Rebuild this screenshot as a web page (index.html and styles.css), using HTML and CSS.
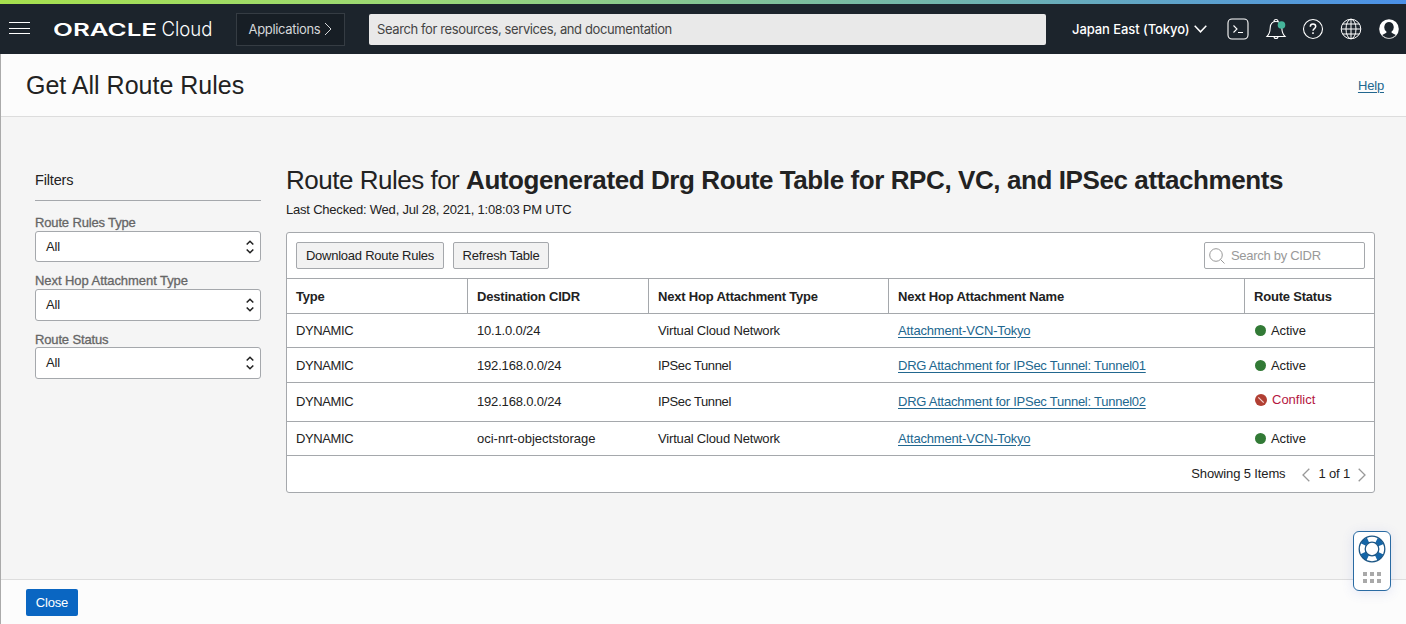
FILE: index.html
```html
<!DOCTYPE html>
<html lang="en">
<head>
    <meta charset="UTF-8">
    <meta name="viewport" content="width=device-width, initial-scale=1.0">
    <title>Get All Route Rules</title>
    <link rel="stylesheet" href="styles.css">
</head>
<body>
    <div class="stripe"></div>
    <header class="topbar">
        <svg class="menu" width="22" height="14" viewBox="0 0 22 14" stroke="#fff" stroke-width="1">
            <path d="M0 1.500h21M0 7.500h21M0 12.500h21"/>
        </svg>
        <svg class="logo" width="162" height="28" viewBox="0 0 162 28" fill="#fff">
            <text class="logo-oracle" x="-1" y="21" textLength="104" lengthAdjust="spacingAndGlyphs">ORACLE</text>
            <text class="logo-cloud" x="107.500" y="21" textLength="51" lengthAdjust="spacingAndGlyphs">Cloud</text>
        </svg>
        <button class="apps">
            <span>Applications</span>
            <svg width="8" height="14" viewBox="0 0 8 14" fill="none" stroke="#d5d7d9"><path d="M1 1l6 6-6 6"/></svg>
        </button>
        <div class="search">Search for resources, services, and documentation</div>
        <div class="region">
            <span>Japan East (Tokyo)</span>
            <svg width="13" height="8" viewBox="0 0 13 8" fill="none" stroke="#fff" stroke-width="1.500"><path d="M.7.8l5.800 6 5.800-6"/></svg>
        </div>
        <div class="icons">
            <svg width="22" height="22" viewBox="0 0 22 22" fill="none" stroke="#fff" stroke-width="1.100">
                <rect x="1" y="1" width="20" height="20" rx="4"/>
                <path d="M6.500 7.500l3.500 3.500-3.500 3.500M11 14.500h5"/>
            </svg>
            <svg width="22" height="22" viewBox="0 0 22 22" fill="none" stroke="#fff" stroke-width="1.100">
                <path d="M9 3.500a2 2 0 0 1 4 0M2 18.500c2.200-2.200 3-4.500 3.200-8.500.2-4 2.400-6.500 5.800-6.500s5.600 2.500 5.800 6.500c.2 4 1 6.300 3.200 8.500zM9 18.500a2 2 0 0 0 4 0"/>
                <circle cx="16.500" cy="7" r="3.800" fill="#45b59b" stroke="none"/>
            </svg>
            <svg width="22" height="22" viewBox="0 0 22 22" fill="none" stroke="#fff" stroke-width="1.100">
                <circle cx="11" cy="11" r="9.500"/>
                <path d="M8.300 8.700c0-1.700 1.100-2.700 2.700-2.700s2.700 1 2.700 2.500c0 2-2.700 2.200-2.700 4.300M11 14.300v1.700" stroke-width="1.500"/>
            </svg>
            <svg width="22" height="22" viewBox="0 0 22 22" fill="none" stroke="#fff" stroke-width="1">
                <circle cx="11" cy="11" r="9.800"/>
                <ellipse cx="11" cy="11" rx="5" ry="9.800"/>
                <path d="M11 1.200v19.600M1.200 11h19.600M2.500 6h17M2.500 16h17"/>
            </svg>
            <svg width="22" height="22" viewBox="0 0 22 22">
                <circle cx="11" cy="11" r="9.800" fill="#fff"/>
                <path d="M11 4a4.800 5.200 0 0 1 2.600 9.500v1.300l4.200 2.200a9 9 0 0 1-13.600 0l4.200-2.200v-1.300A4.800 5.200 0 0 1 11 4z" fill="#1c242c"/>
                <path d="M4.500 17.800a9.400 9.400 0 0 0 13 0" fill="none" stroke="#bbb" stroke-width=".8"/>
            </svg>
        </div>
    </header>

    <div class="page">
        <div class="titlebar">
            <h1>Get All Route Rules</h1>
            <a class="link" href="#">Help</a>
        </div>

        <main class="content">
            <aside class="filters">
                <h3>Filters</h3>
                <label>Route Rules Type</label>
                <div class="select">
                    <span>All</span>
                    <svg width="8" height="14" viewBox="0 0 8 14" fill="none" stroke="#222" stroke-width="1.600"><path d="M.7 4.500L4 1.300l3.300 3.200M.7 9.500L4 12.700l3.300-3.200"/></svg>
                </div>
                <label class="wide">Next Hop Attachment Type</label>
                <div class="select tall">
                    <span>All</span>
                    <svg width="8" height="14" viewBox="0 0 8 14" fill="none" stroke="#222" stroke-width="1.600"><path d="M.7 4.500L4 1.300l3.300 3.200M.7 9.500L4 12.700l3.300-3.200"/></svg>
                </div>
                <label class="last">Route Status</label>
                <div class="select tall">
                    <span>All</span>
                    <svg width="8" height="14" viewBox="0 0 8 14" fill="none" stroke="#222" stroke-width="1.600"><path d="M.7 4.500L4 1.300l3.300 3.200M.7 9.500L4 12.700l3.300-3.200"/></svg>
                </div>
            </aside>

            <section class="rules">
                <h2>Route Rules for <b>Autogenerated Drg Route Table for RPC, VC, and IPSec attachments</b></h2>
                <p class="checked">Last Checked: Wed, Jul 28, 2021, 1:08:03 PM UTC</p>

                <div class="panel">
                    <div class="toolbar">
                        <button class="btn">Download Route Rules</button>
                        <button class="btn refresh">Refresh Table</button>
                        <div class="cidr">
                            <svg width="16" height="16" viewBox="0 0 16 16" fill="none" stroke="#999"><circle cx="7" cy="7" r="6.300"/><path d="M11.500 11.500l4 4"/></svg>
                            <span>Search by CIDR</span>
                        </div>
                    </div>
                    <table>
                        <colgroup>
                            <col class="c-type"><col class="c-dest"><col class="c-hop"><col class="c-name"><col>
                        </colgroup>
                        <tr class="head">
                            <th>Type</th>
                            <th>Destination CIDR</th>
                            <th>Next Hop Attachment Type</th>
                            <th>Next Hop Attachment Name</th>
                            <th>Route Status</th>
                        </tr>
                        <tr>
                            <td>DYNAMIC</td>
                            <td>10.1.0.0/24</td>
                            <td>Virtual Cloud Network</td>
                            <td><a class="link" href="#">Attachment-VCN-Tokyo</a></td>
                            <td><span class="status"><i class="dot"></i>Active</span></td>
                        </tr>
                        <tr class="row2">
                            <td>DYNAMIC</td>
                            <td>192.168.0.0/24</td>
                            <td class="tunnel">IPSec Tunnel</td>
                            <td><a class="link drg" href="#">DRG Attachment for IPSec Tunnel: Tunnel01</a></td>
                            <td><span class="status"><i class="dot"></i>Active</span></td>
                        </tr>
                        <tr class="row3">
                            <td>DYNAMIC</td>
                            <td>192.168.0.0/24</td>
                            <td class="tunnel">IPSec Tunnel</td>
                            <td><a class="link drg" href="#">DRG Attachment for IPSec Tunnel: Tunnel02</a></td>
                            <td><span class="status conflict"><svg width="12" height="12" viewBox="0 0 12 12"><circle cx="6" cy="6" r="6" fill="#b13f33"/><path d="M3.300 3.300l5.400 5.400" stroke="#f3d4d0" stroke-width="1.200"/></svg>Conflict</span></td>
                        </tr>
                        <tr>
                            <td>DYNAMIC</td>
                            <td class="service">oci-nrt-objectstorage</td>
                            <td>Virtual Cloud Network</td>
                            <td><a class="link" href="#">Attachment-VCN-Tokyo</a></td>
                            <td><span class="status"><i class="dot"></i>Active</span></td>
                        </tr>
                    </table>
                    <div class="pager">
                        <span class="showing">Showing 5 Items</span>
                        <svg width="8" height="14" viewBox="0 0 8 14" fill="none" stroke="#999" stroke-width="1.300"><path d="M7.300.7L1 7l6.300 6.300"/></svg>
                        <span class="count">1 of 1</span>
                        <svg width="8" height="14" viewBox="0 0 8 14" fill="none" stroke="#999" stroke-width="1.300"><path d="M.7.7L7 7 .7 13.300"/></svg>
                    </div>
                </div>
            </section>
        </main>

        <footer class="footer">
            <button class="close">Close</button>
        </footer>
    </div>

    <div class="support">
        <svg width="28" height="28" viewBox="0 0 28 28">
            <circle cx="14" cy="14" r="10" fill="none" stroke="#fff" stroke-width="6"/>
            <circle cx="14" cy="14" r="9.800" fill="none" stroke="#1566a8" stroke-width="5.800" stroke-dasharray="6.600 8.794" stroke-dashoffset="-4.400"/>
            <circle cx="14" cy="14" r="12.800" fill="none" stroke="#1c5685" stroke-width="1.300"/>
            <circle cx="14" cy="14" r="6.800" fill="#fff" stroke="#1c5685" stroke-width="1.300"/>
        </svg>
        <svg width="18" height="11" viewBox="0 0 18 11" fill="#a9a9a9">
            <path d="M0 0h4v4H0zM7 0h4v4H7zM14 0h4v4h-4zM0 7h4v4H0zM7 7h4v4H7zM14 7h4v4h-4z"/>
        </svg>
    </div>
</body>
</html>
```
FILE: styles.css
```css
* {
    box-sizing: border-box;
}
body {
    margin: 0;
    height: 624px;
    display: flex;
    flex-direction: column;
    overflow: hidden;
    font-family: "Liberation Sans", Arial, sans-serif;
    font-size: 13px;
    line-height: 16px;
    letter-spacing: -0.17px;
    color: #222;
    background-color: #f5f5f5;
}
h1, h2, h3, p {
    margin: 0;
    font-weight: normal;
}
button {
    font: inherit;
    letter-spacing: inherit;
    color: inherit;
    padding: 0;
}
svg {
    display: block;
    flex: none;
}
.link {
    color: #22678f;
    text-decoration: underline;
    text-underline-offset: 2px;
}

/* top bar */
.stripe {
    height: 4px;
    background: linear-gradient(to right, #a6e04e, #9bd877 30%, #6cb0b4 72%, #4a90e8);
}
.topbar {
    height: 50px;
    display: flex;
    align-items: center;
    padding: 0 6px 0 9px;
    background-color: #1c242c;
    color: #fff;
    font-family: Inter, sans-serif;
    letter-spacing: 0;
}
.menu {
    margin-top: -2px;
}
.logo {
    margin-left: 23px;
}
.logo-oracle {
    font-family: Inter, sans-serif;
    font-size: 17.5px;
    font-weight: 600;
}
.logo-cloud {
    font-family: Inter, sans-serif;
    font-size: 20px;
    font-weight: 300;
}
.apps {
    width: 109px;
    height: 33px;
    margin-left: 20px;
    display: flex;
    align-items: center;
    justify-content: center;
    gap: 4px;
    background-color: #171e25;
    border: 1px solid #353c43;
    color: #d5d7d9;
    letter-spacing: -0.33px;
}
.search {
    width: 677px;
    height: 31px;
    margin-left: 24px;
    padding: 0 8px;
    line-height: 31px;
    background-color: #e9e9e9;
    border-radius: 2px;
    color: #444;
    letter-spacing: -0.39px;
}
.region {
    margin-left: 26px;
    display: flex;
    align-items: center;
    gap: 4px;
    font-weight: 500;
    letter-spacing: -0.08px;
}
.icons {
    margin-left: auto;
    display: flex;
    gap: 15.8px;
}

/* page */
.page {
    flex: 1;
    display: flex;
    flex-direction: column;
    border-left: 1px solid #aaa;
}
.titlebar {
    height: 63px;
    display: flex;
    align-items: center;
    justify-content: space-between;
    padding: 0 22px 0 25px;
    background-color: #fcfcfc;
    border-bottom: 1px solid #ddd;
}
.titlebar h1 {
    font-size: 25px;
    line-height: 30px;
    letter-spacing: 0;
}
.titlebar .link {
    margin-top: 2px;
}
.content {
    flex: 1;
    display: flex;
    gap: 25px;
    padding: 48px 31px 0 34px;
}
.filters {
    width: 226px;
}
.filters h3 {
    height: 36px;
    margin-bottom: 14px;
    padding-top: 7px;
    border-bottom: 1px solid #a5a8ac;
    font-size: 14.5px;
}
.filters label {
    display: block;
    color: #666;
    letter-spacing: -0.15px;
    -webkit-text-stroke: 0.3px #666;
}
.filters .wide {
    letter-spacing: -0.06px;
}
.filters .last {
    height: 15px;
}
.select {
    height: 31px;
    margin-bottom: 11px;
    padding: 0 6px 0 10px;
    display: flex;
    align-items: center;
    justify-content: space-between;
    background-color: #fff;
    border: 1px solid #a5a8ac;
    border-radius: 3px;
}
.select.tall {
    height: 32px;
}

/* route rules */
.rules {
    flex: 1;
}
.rules h2 {
    font-size: 26px;
    line-height: 30px;
    letter-spacing: -0.49px;
    white-space: nowrap;
}
.rules h2 b {
    letter-spacing: -0.41px;
}
.checked {
    margin-top: 7px;
    letter-spacing: -0.21px;
}
.panel {
    height: 261px;
    margin-top: 14px;
    background-color: #fff;
    border: 1px solid #a5a8ac;
    border-radius: 3px;
}
.toolbar {
    height: 46px;
    display: flex;
    align-items: center;
    padding: 0 9px;
    border-bottom: 1px solid #a5a8ac;
}
.btn {
    width: 148px;
    height: 27px;
    background-color: #f2f2f2;
    border: 1px solid #a5a8ac;
    border-radius: 2px;
    letter-spacing: -0.24px;
}
.btn.refresh {
    width: 96px;
    margin-left: 9px;
}
.cidr {
    width: 161px;
    height: 27px;
    margin-left: auto;
    padding-left: 4px;
    display: flex;
    align-items: center;
    gap: 6px;
    border: 1px solid #a5a8ac;
    border-radius: 2px;
    color: #999;
    letter-spacing: -0.3px;
}
table {
    width: 100%;
    table-layout: fixed;
    border-collapse: separate;
    border-spacing: 0;
}
.c-type, .c-dest {
    width: 181px;
}
.c-hop {
    width: 240px;
}
.c-name {
    width: 356px;
}
th, td {
    height: 34px;
    padding: 0 9px;
    text-align: left;
    white-space: nowrap;
    border-bottom: 1px solid #a5a8ac;
}
td:first-child {
    letter-spacing: -0.4px;
}
th {
    height: 35px;
    padding-top: 1px;
    border-right: 1px solid #a5a8ac;
    letter-spacing: -0.2px;
}
th:last-child {
    border-right: none;
}
.row2 td {
    height: 35px;
    padding-top: 1px;
}
.row3 td {
    height: 39px;
}
.tunnel {
    letter-spacing: -0.36px;
}
.drg {
    letter-spacing: -0.25px;
}
.service {
    letter-spacing: 0;
}
.status {
    display: flex;
    align-items: center;
    gap: 5px;
    padding-left: 1px;
    letter-spacing: -0.1px;
}
.status.conflict {
    padding-bottom: 4px;
    letter-spacing: 0;
    color: #b5163f;
}
.dot {
    width: 11px;
    height: 11px;
    border-radius: 50%;
    background-color: #327a36;
}
.pager {
    height: 36px;
    display: flex;
    align-items: center;
    justify-content: flex-end;
    gap: 8px;
    padding: 2px 8px 0 0;
}
.showing {
    margin: -3px 9px 0 0;
    letter-spacing: -0.13px;
}
.count {
    margin-top: -2px;
}

/* footer */
.footer {
    height: 45px;
    padding: 9px 25px;
    background-color: #fcfcfc;
    border-top: 1px solid #ddd;
}
.close {
    display: block;
    width: 52px;
    height: 27px;
    background-color: #0a66c2;
    border: none;
    border-radius: 2px;
    color: #fff;
}
.support {
    position: absolute;
    right: 15px;
    top: 531px;
    width: 38px;
    height: 60px;
    padding-top: 3px;
    display: flex;
    flex-direction: column;
    align-items: center;
    gap: 9px;
    background-color: #fff;
    border: 1.5px solid #2a6ba3;
    border-radius: 6px;
    box-shadow: 0 2px 12px rgba(80, 100, 200, 0.15);
}
```
